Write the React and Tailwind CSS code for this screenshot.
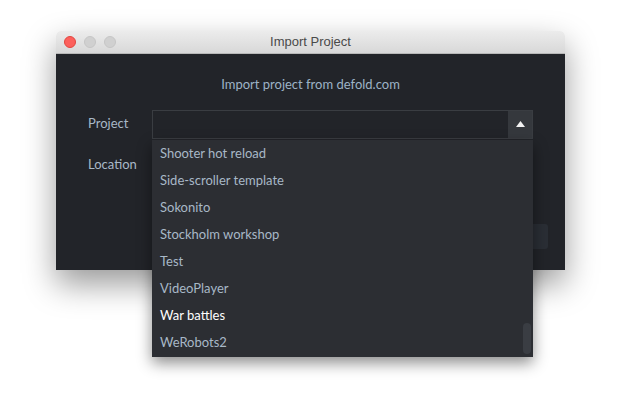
const projects = [
  'Shooter hot reload',
  'Side-scroller template',
  'Sokonito',
  'Stockholm workshop',
  'Test',
  'VideoPlayer',
  'War battles',
  'WeRobots2',
]

export default function App() {
  return (
    <div className="h-[404px] w-[630px] bg-white pl-[56px] pt-[31px] font-['Lato',sans-serif]">
      <div className="relative w-[509px] rounded-t-[5px] shadow-[0_14px_32px_rgba(0,0,0,0.4)]">
        <div className="relative flex h-[23px] items-center rounded-t-[5px] border-b border-[#b8b8b8] bg-gradient-to-b from-[#ececec] to-[#d8d8d8] px-[8px]">
          <div className="flex gap-[8px]">
            <span className="h-[12px] w-[12px] rounded-full border border-[#e2463f] bg-[#fc605c]" />
            <span className="h-[12px] w-[12px] rounded-full border border-[#c6c6c6] bg-[#d0d0d0]" />
            <span className="h-[12px] w-[12px] rounded-full border border-[#c6c6c6] bg-[#d0d0d0]" />
          </div>
          <div className="absolute inset-0 flex items-center justify-center text-[13px] text-[#4a4a4a] font-['Liberation_Sans',sans-serif]">
            Import Project
          </div>
        </div>

        <div className="h-[216px] bg-[#222429] pt-[21px]">
          <p className="text-center text-[13px] text-[#9db3c6]">Import project from defold.com</p>

          <div className="mt-[15px] flex items-center pl-[32px]">
            <span className="w-[64px] text-[13px] text-[#a8b8c7]">Project</span>
            <div className="flex h-[29px] w-[381px] border border-[#3a3d42] bg-[#222429]">
              <div className="flex-1" />
              <div className="flex w-[24px] items-center justify-center bg-[#35383d]">
                <svg width="9" height="6" viewBox="0 0 9 6"><path d="M4.5 0L9 6H0z" fill="#f2f2f2" /></svg>
              </div>
            </div>
          </div>

          <div className="mt-[16px] flex items-center pl-[32px]">
            <span className="w-[64px] text-[13px] text-[#a8b8c7]">Location</span>
          </div>

          <div className="mt-[50px] flex justify-end pr-[17px]">
            <div className="h-[25px] w-[60px] rounded-[3px] bg-[#2a2e35]" />
          </div>
        </div>

        <div className="absolute left-[96px] top-[109px] w-[381px] pb-[1px] bg-[#2c2e33] shadow-[0_6px_14px_rgba(0,0,0,0.45)]">
          {projects.map((p) => (
            <div
              key={p}
              className={`flex h-[27px] items-center pl-[8px] text-[13px] ${p === 'War battles' ? 'text-white' : 'text-[#a8b8c7]'}`}
            >
              {p}
            </div>
          ))}
          <div className="absolute right-[2px] top-[183px] h-[31px] w-[8px] rounded-[4px] bg-[#3a3d43]" />
        </div>
      </div>
    </div>
  )
}
